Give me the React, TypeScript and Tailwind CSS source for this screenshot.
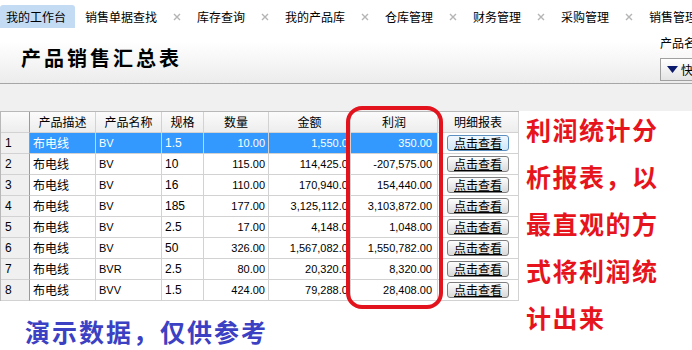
import { ReactNode } from 'react';

const cjk = "font-['Noto_Sans_CJK_SC',sans-serif]";
const num = "font-['Liberation_Sans','Noto_Sans_CJK_SC',sans-serif]";

const tabs = ['销售单据查找', '库存查询', '我的产品库', '仓库管理', '财务管理', '采购管理', '销售管理'];

const headers = ['', '产品描述', '产品名称', '规格', '数量', '金额', '利润', '明细报表'];

const rows = [
  ['1', '布电线', 'BV', '1.5', '10.00', '1,550.00', '350.00'],
  ['2', '布电线', 'BV', '10', '115.00', '114,425.00', '-207,575.00'],
  ['3', '布电线', 'BV', '16', '110.00', '170,940.00', '154,440.00'],
  ['4', '布电线', 'BV', '185', '177.00', '3,125,112.00', '3,103,872.00'],
  ['5', '布电线', 'BV', '2.5', '17.00', '4,148.00', '1,048.00'],
  ['6', '布电线', 'BV', '50', '326.00', '1,567,082.00', '1,550,782.00'],
  ['7', '布电线', 'BVR', '2.5', '80.00', '20,320.00', '8,320.00'],
  ['8', '布电线', 'BVV', '1.5', '424.00', '79,288.00', '28,408.00'],
];

function CloseMark() {
  return (
    <svg width="8" height="8" viewBox="0 0 8 8" className="mx-[16px] shrink-0">
      <path d="M1 1L7 7M7 1L1 7" stroke="#b4b4b4" strokeWidth="1.4" />
    </svg>
  );
}

function Cell({ children, className = '' }: { children?: ReactNode; className?: string }) {
  return (
    <div className={`h-[21px] border-r border-b border-[#d2d2d2] flex items-center overflow-hidden whitespace-nowrap ${className}`}>
      {children}
    </div>
  );
}

export default function App() {
  return (
    <div className={`w-[692px] h-[350px] overflow-hidden bg-white text-black ${cjk}`}>
      {/* Top: tabs + title */}
      <div className="bg-linear-to-b from-white via-white to-[#ececec] border-b border-[#a6a6a6]">
        <div className="h-[28px] flex items-end whitespace-nowrap overflow-hidden text-[12px]">
          <div className="h-[23px] w-[75px] shrink-0 bg-[#c4dbf4] rounded-t-[3px] pl-[6px] flex items-center">我的工作台</div>
          <div className="flex items-center h-[23px] pl-[10px]">
            {tabs.map((t, i) => (
              <div key={t} className="flex items-center shrink-0">
                <span>{t}</span>
                {i < tabs.length - 1 && <CloseMark />}
              </div>
            ))}
          </div>
        </div>
        <div className="h-[55px] flex">
          <div className="flex-1 pl-[21px] pt-[16px]">
            <h1 className="text-[20px] leading-[28px] font-bold tracking-[3px]">产品销售汇总表</h1>
          </div>
          <div className="w-[32px] shrink-0 overflow-hidden whitespace-nowrap pt-[8px]">
            <div className="text-[12px] leading-[14px]">产品名称</div>
            <div className="mt-[8px] h-[23px] w-[80px] border border-[#a0a0a0] bg-linear-to-b from-white to-[#e4e4e4] flex items-center pl-[6px] gap-[3px] text-[12px]">
              <svg width="11" height="7" viewBox="0 0 11 7">
                <path d="M0 0H11L5.5 7Z" fill="#0c1a6e" />
              </svg>
              <span>快速查询</span>
            </div>
          </div>
        </div>
      </div>

      {/* toolbar strip */}
      <div className="h-[27px] bg-[#f0f0f0]" />

      <div className="flex">
        <div className="shrink-0">
          {/* table */}
          <div className="relative">
            <div className="grid grid-cols-[29px_66px_66px_42px_65px_82px_87px_81px] border-t border-l border-[#b8b8b8] text-[12px]">
              {headers.map((h, i) => (
                <Cell
                  key={i}
                  className={`justify-center bg-linear-to-b from-[#fbfbfb] to-[#ededed] ${i === 0 ? 'border-r-[#9a9a9a]' : ''}`}
                >
                  {h}
                </Cell>
              ))}
              {rows.map((r, ri) => {
                const sel = ri === 0;
                const selCls = sel ? 'bg-[#3399ff] text-white' : '';
                return [
                  <Cell key={`${ri}-n`} className={`bg-[#f0f0f0] pl-[4px] border-r-[#9a9a9a] ${num} text-[12px]`}>
                    {r[0]}
                  </Cell>,
                  <Cell key={`${ri}-d`} className={`pl-[3px] ${selCls}`}>{r[1]}</Cell>,
                  <Cell key={`${ri}-p`} className={`pl-[3px] ${num} text-[11px] ${selCls}`}>{r[2]}</Cell>,
                  <Cell key={`${ri}-s`} className={`pl-[3px] ${num} text-[12px] ${selCls}`}>{r[3]}</Cell>,
                  <Cell key={`${ri}-q`} className={`justify-end pr-[3px] ${num} text-[11px] ${selCls}`}>{r[4]}</Cell>,
                  <Cell key={`${ri}-a`} className={`justify-end ${num} text-[11px] ${selCls}`}>
                    <span className="mr-[-4px]">{r[5]}</span>
                  </Cell>,
                  <Cell key={`${ri}-l`} className={`justify-end pr-[5px] ${num} text-[11px] ${selCls}`}>{r[6]}</Cell>,
                  <Cell key={`${ri}-b`} className="pl-[9px]">
                    <button
                      className={`w-[62px] h-[16px] rounded-[3px] border text-[12px] leading-none underline flex items-center justify-center ${
                        sel
                          ? 'border-[#5a8fc0] bg-linear-to-b from-[#f2f8fd] to-[#cfe6f8]'
                          : 'border-[#7e7e7e] bg-linear-to-b from-[#fdfdfd] to-[#d9d9d9]'
                      }`}
                    >
                      点击查看
                    </button>
                  </Cell>,
                ];
              })}
            </div>
            {/* annotation ring round the profit column */}
            <div className="absolute left-[346px] top-[-5px] w-[97px] h-[203px] border-[4px] border-[#e2131d] rounded-[16px] pointer-events-none" />
          </div>

          <p className="mt-[15px] pl-[25px] text-[25px] leading-[30px] font-bold tracking-[2px] text-[#3c40c2]">
            演示数据，仅供参考
          </p>
        </div>

        <div className="pl-[7px] -mt-[5px] text-[25px] leading-[47px] font-bold tracking-[1.5px] text-[#e6141c]">
          <div>利润统计分</div>
          <div>析报表，以</div>
          <div>最直观的方</div>
          <div>式将利润统</div>
          <div>计出来</div>
        </div>
      </div>
    </div>
  );
}
